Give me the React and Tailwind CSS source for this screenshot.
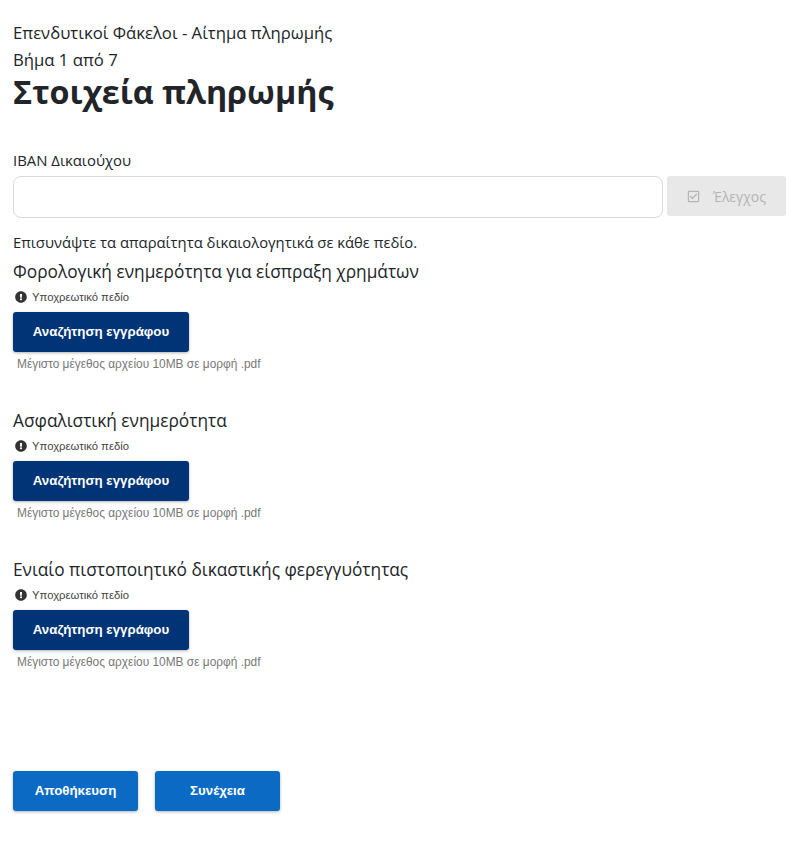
import React from 'react';
import { FaExclamationCircle, FaRegCheckSquare } from 'react-icons/fa';

const documents = [
    "Φορολογική ενημερότητα για είσπραξη χρημάτων",
    "Ασφαλιστική ενημερότητα",
    "Ενιαίο πιστοποιητικό δικαστικής φερεγγυότητας"
];

const DocumentField = ({ title }) => (
    <div className="h-[149px]">
        <div className="text-[17.3px] leading-[24px] text-[#212529]">{title}</div>
        <div className="mt-[5px] ml-[2px] flex h-[16px] items-center gap-[5px] text-[11.3px] text-[#444] font-['Liberation_Sans',sans-serif]">
            <FaExclamationCircle size={12} className="text-[#333]" />
            <span>Υποχρεωτικό πεδίο</span>
        </div>
        <button className="mt-[7px] block h-[40px] w-[176px] rounded-[3px] bg-[#003476] text-[13.3px] font-bold text-white shadow-[0_1px_3px_rgba(0,0,0,0.3)] font-['Liberation_Sans',sans-serif]">
            Αναζήτηση εγγράφου
        </button>
        <div className="mt-[4px] ml-[4px] text-[11.9px] leading-[16px] text-[#777] font-['Liberation_Sans',sans-serif]">
            Μέγιστο μέγεθος αρχείου 10MB σε μορφή .pdf
        </div>
    </div>
);

const App = () => {
    return (
        <div className="min-h-[841px] bg-white pl-[13px] pr-[6px] pt-[19px] font-['Open_Sans',sans-serif] text-[#212529]">
            <div className="text-[16.7px] leading-[27px]">Επενδυτικοί Φάκελοι - Αίτημα πληρωμής</div>
            <div className="text-[16.7px] leading-[27px]">Βήμα 1 από 7</div>
            <h1 className="text-[32.3px] font-bold leading-[36px]">Στοιχεία πληρωμής</h1>

            <div className="mt-[41px] text-[14.9px] leading-[20px]">IBAN Δικαιούχου</div>
            <div className="mt-[6px] flex gap-[4px]">
                <input className="h-[42px] flex-1 rounded-[8px] border border-[#d9d9d9] bg-white" />
                <button disabled className="flex h-[40px] w-[119px] items-center justify-center gap-[13px] rounded-[3px] bg-[#e8e8e8] text-[14px] text-[#b5b5b5]">
                    <FaRegCheckSquare size={13} />
                    <span>Έλεγχος</span>
                </button>
            </div>

            <div className="mt-[14px] text-[14.8px] leading-[20px]">Επισυνάψτε τα απαραίτητα δικαιολογητικά σε κάθε πεδίο.</div>
            <div className="mt-[8px]">
                {documents.map((title) => (
                    <DocumentField key={title} title={title} />
                ))}
            </div>

            <div className="mt-[64px] flex gap-[17px]">
                <button className="h-[40px] w-[125px] rounded-[3px] bg-[#0b6bc4] text-[13.3px] font-bold text-white shadow-[0_1px_3px_rgba(0,0,0,0.3)] font-['Liberation_Sans',sans-serif]">Αποθήκευση</button>
                <button className="h-[40px] w-[125px] rounded-[3px] bg-[#0b6bc4] text-[13.3px] font-bold text-white shadow-[0_1px_3px_rgba(0,0,0,0.3)] font-['Liberation_Sans',sans-serif]">Συνέχεια</button>
            </div>
        </div>
    );
};

export default App;
